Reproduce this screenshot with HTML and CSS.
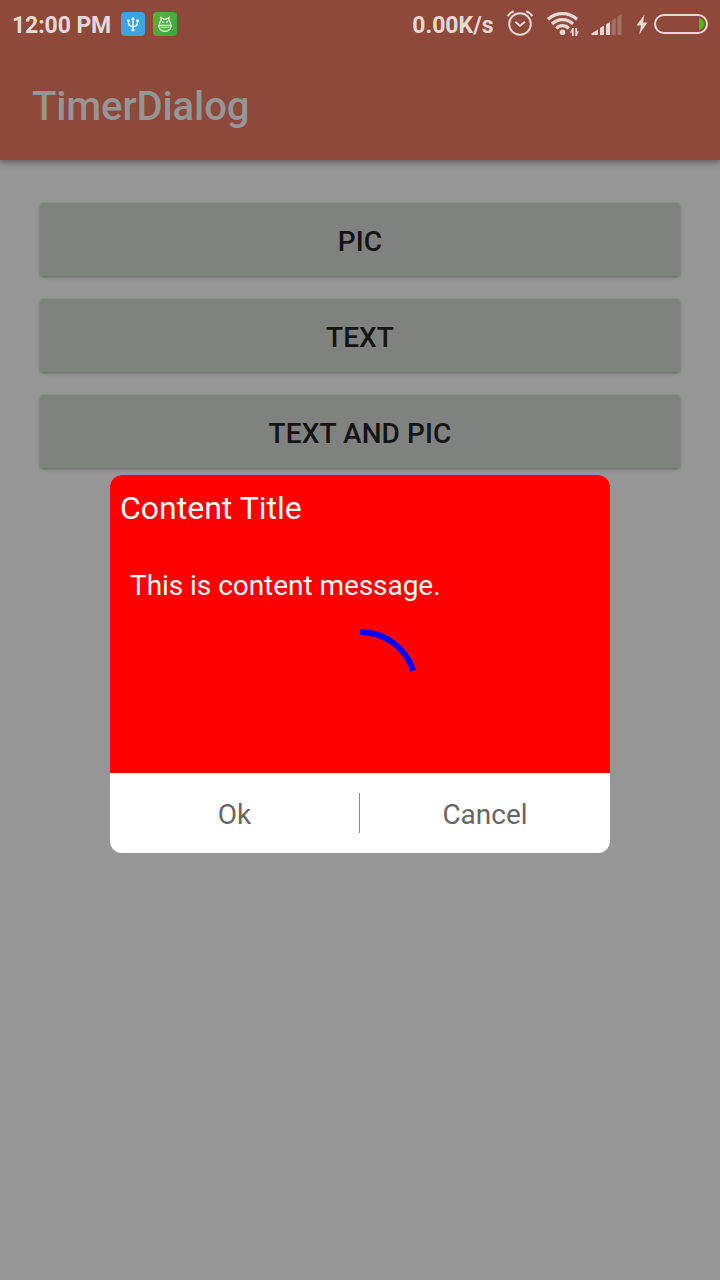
FILE: index.html
```html
<!DOCTYPE html>
<html lang="en">
<head>
<meta charset="utf-8">
<title>TimerDialog</title>
<link rel="stylesheet" href="styles.css">
</head>
<body>
<div class="screen">
  <header class="header">
    <div class="status-bar">
      <span class="clock">12:00 PM</span>
      <svg class="badge-icon usb" viewBox="0 0 24 24">
        <rect width="24" height="24" rx="4" fill="#3ca5df"/>
        <path d="M12 5.500V18M7.500 8v2.800c0 2.200 1.800 3.700 4.500 3.700s4.500-1.500 4.500-3.700V8" fill="none" stroke="#f2f6fa" stroke-width="1.500"/>
        <path d="M12 4.800l-1.800 3h3.600zM6.200 7.500h2.600v2.300H6.200zM15.200 7.500h2.600v2.300h-2.600zM10.500 17h3v2.200h-3z" fill="#f2f6fa"/>
      </svg>
      <svg class="badge-icon droid" viewBox="0 0 24 24">
        <defs><linearGradient id="leaf" x1="0" y1="0" x2="1" y2="1"><stop offset="0" stop-color="#62ad39"/><stop offset="1" stop-color="#35ab3d"/></linearGradient></defs>
        <rect width="24" height="24" rx="4" fill="url(#leaf)"/>
        <path d="M6.500 12.500Q6.300 9.800 8.200 8.200L8 5.600l2.500 1.500h3L16 5.600l-.2 2.600q1.900 1.600 1.700 4.300M5 13.500h14M5.700 13.500c.2 3.500 2.900 5.800 6.300 5.800s6.100-2.300 6.300-5.800" fill="none" stroke="#e4f3df" stroke-width="1.400"/>
        <path d="M7.500 15.700h9" stroke="#e4f3df" stroke-width=".8"/>
        <path d="M9 9.700l2 1M15 9.700l-2 1" stroke="#e4f3df" stroke-width="1.500"/>
      </svg>
      <span class="speed">0.00K/s</span>
      <svg class="alarm" viewBox="0 0 28 28">
        <g fill="none" stroke="#e8d8d5" stroke-width="2">
          <circle cx="14" cy="15" r="10.800"/>
          <path d="M9.300 12.800l4.700 4 4.900-4M1.700 7.300Q3.500 3.800 8 2.300M26.300 7.300Q24.500 3.800 20 2.300"/>
        </g>
      </svg>
      <svg class="wifi" viewBox="0 0 34 28">
        <g fill="none" stroke="#e8d8d5" stroke-width="3.200">
          <path d="M2 9.200Q8.500 3.700 16.500 3.700T31 9.200"/>
          <path d="M6 14Q10.500 9.700 16.500 9.700T27 14"/>
          <path d="M10.300 18.500Q13 15.700 16.500 15.700T22.700 18.500"/>
        </g>
        <circle cx="16.500" cy="22.300" r="2.800" fill="#e8d8d5"/>
        <path d="M26 17.500v9M30 17.500v9" stroke="#8e493a" stroke-width="4"/>
        <path d="M26.800 18v8M30.200 18v8" stroke="#e8d8d5" stroke-width="1.800"/>
        <path d="M24 22.500l2-3.500v3.500zM33 21.500l-2 3.500v-3.500z" fill="#e8d8d5"/>
      </svg>
      <svg class="signal" viewBox="0 0 31 21">
        <path d="M.5 21v-1.500L7 15.500V21zM9 21v-7l4-2.500V21zM15 21V10.500L19 8v13z" fill="#e8d8d5"/>
        <path d="M20.700 21V6.500l4-2.500v17zM26.500 21V2.800l4-2.500V21z" fill="#a77064"/>
      </svg>
      <svg class="bolt" viewBox="0 0 12 21"><path d="M8.500.5L.5 11.500H5L3.200 20.500 11.500 8.500H7z" fill="#e8d8d5"/></svg>
      <svg class="battery" viewBox="0 0 54 20">
        <rect x="1" y="1" width="52" height="18" rx="9" fill="none" stroke="#e8d8d5" stroke-width="2"/>
        <path d="M45 4c6.600 1 6.600 11 0 12z" fill="#43c400"/>
      </svg>
    </div>
    <h1 class="app-title">TimerDialog</h1>
  </header>
  <main class="content">
    <button class="action">PIC</button>
    <button class="action">TEXT</button>
    <button class="action">TEXT AND PIC</button>
  </main>
  <section class="dialog" role="dialog">
    <div class="dialog-body">
      <h2 class="dialog-title">Content Title</h2>
      <p class="dialog-message">This is content message.</p>
      <svg class="timer" viewBox="0 0 120 120"><path d="M60 4A56 56 0 0 1 113.260 42.700" fill="none" stroke="#00f" stroke-width="6"/></svg>
    </div>
    <div class="dialog-actions">
      <button class="choice">Ok</button>
      <span class="divider"></span>
      <button class="choice">Cancel</button>
    </div>
  </section>
</div>
</body>
</html>
```
FILE: styles.css
```css
* { box-sizing: border-box; }
body { margin: 0; font-family: Roboto, sans-serif; }
button { border: 0; padding: 0; font-family: inherit; }
h1, h2, p { margin: 0; }
svg { display: block; flex: none; }

.screen {
  position: relative;
  width: 720px;
  height: 1280px;
  overflow: hidden;
  background: #969696;
}

.header {
  height: 160px;
  background: #8e493a;
  box-shadow: 0 2px 7px rgba(0, 0, 0, .42);
}

.status-bar {
  display: flex;
  align-items: center;
  height: 48px;
  padding: 0 12px;
  color: #e8d8d5;
  font-size: 23px;
  font-weight: 700;
  line-height: 27px;
  white-space: nowrap;
}
.clock { width: 109px; padding-top: 2px; letter-spacing: -.1px; }
.badge-icon { width: 24px; height: 24px; }
.droid { margin-left: 8px; }
.speed { margin-left: auto; padding-top: 2px; }
.alarm { width: 28px; height: 28px; margin-left: 12px; margin-top: -2px; }
.wifi { width: 34px; height: 28px; margin-left: 12.5px; }
.signal { width: 31px; height: 21px; margin-left: 11px; margin-top: 1px; }
.bolt { width: 12px; height: 21px; margin-left: 14px; }
.battery { width: 54px; height: 20px; margin-left: 6px; }

.app-title {
  padding: 35px 32px 0;
  color: #969696;
  font-size: 40px;
  font-weight: 500;
  line-height: 48px;
  letter-spacing: -.1px;
}

.content {
  display: grid;
  gap: 23px;
  padding: 43px 40px 0;
}
.action {
  height: 73px;
  padding-top: 4px;
  border-radius: 4px;
  background: #808280;
  box-shadow: 0 2px 3px rgba(0, 0, 0, .22), 0 0 2px rgba(0, 0, 0, .14);
  color: #131413;
  font-size: 28px;
  font-weight: 500;
  letter-spacing: .1px;
}

.dialog {
  position: absolute;
  top: 475px;
  left: 110px;
  width: 500px;
  height: 378px;
  border-radius: 12px;
  overflow: hidden;
  background: #fff;
}
.dialog-body {
  display: flex;
  flex-direction: column;
  height: 298px;
  padding: 10px;
  background: #f00;
  color: #fff;
}
.dialog-title {
  font-size: 32px;
  font-weight: 400;
  line-height: 46px;
}
.dialog-message {
  padding: 38px 10px 0;
  font-size: 28px;
  line-height: 34px;
  letter-spacing: -.05px;
}
.timer {
  align-self: center;
  width: 120px;
  height: 120px;
  margin-top: 25px;
}
.dialog-actions {
  display: grid;
  grid-template-columns: 249px 1px 250px;
  align-items: center;
  height: 80px;
}
.choice {
  height: 80px;
  padding-top: 3px;
  background: none;
  color: #666;
  font-size: 28px;
}
.divider { height: 40px; background: #888; }
```
